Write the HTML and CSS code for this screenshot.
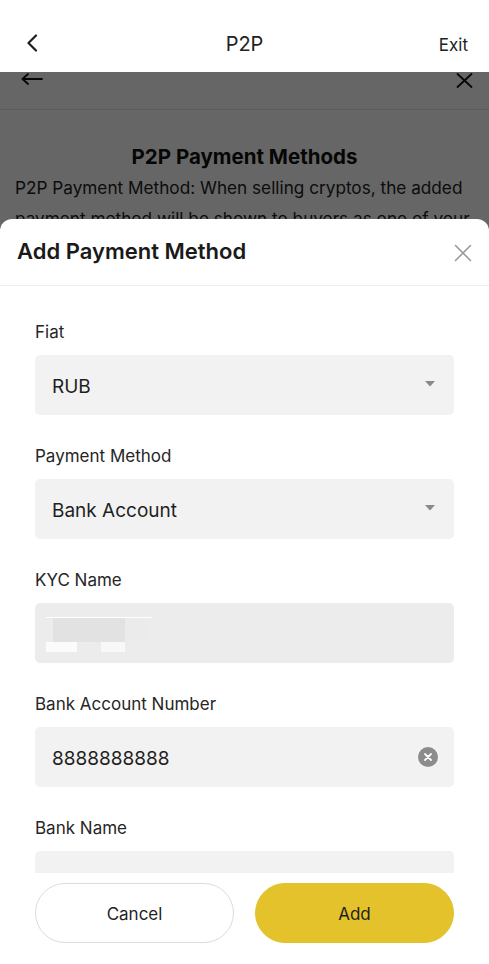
FILE: index.html
```html
<!DOCTYPE html>
<html lang="en">
<head>
<meta charset="utf-8">
<title>P2P</title>
<link rel="stylesheet" href="styles.css">
</head>
<body>
<div class="app">
  <header class="topbar">
    <svg class="topbar-back" width="12" height="18" viewBox="0 0 12 18"><path d="M10 1.5 L2.5 9 L10 16.5" fill="none" stroke="#1f1f1f" stroke-width="2.2" stroke-linecap="round" stroke-linejoin="round"/></svg>
    <div class="topbar-title">P2P</div>
    <div class="topbar-exit">Exit</div>
  </header>

  <main class="stage">
    <section class="page">
      <div class="page-nav">
        <svg width="22" height="12" viewBox="0 0 22 12"><path d="M21 6 H2 M7 1 L1.5 6 L7 11" fill="none" stroke="#111" stroke-width="1.8" stroke-linecap="round" stroke-linejoin="round"/></svg>
        <svg width="17" height="15" viewBox="0 0 17 15"><path d="M1.5 1 L15.5 14 M15.5 1 L1.5 14" fill="none" stroke="#111" stroke-width="1.8" stroke-linecap="round"/></svg>
      </div>
      <h2 class="page-title">P2P Payment Methods</h2>
      <p class="page-text">P2P Payment Method: When selling cryptos, the added payment method will be shown to buyers as one of your accepted payment options.</p>
    </section>

    <div class="backdrop"></div>

    <div class="sheet">
      <div class="sheet-head">
        <h1 class="sheet-title">Add Payment Method</h1>
        <svg class="sheet-close" width="18" height="18" viewBox="0 0 18 18"><path d="M1.5 1.5 L16.5 16.5 M16.5 1.5 L1.5 16.5" fill="none" stroke="#9a9a9a" stroke-width="1.6" stroke-linecap="round"/></svg>
      </div>

      <div class="sheet-body">
        <div class="field">
          <div class="field-label">Fiat</div>
          <div class="field-box">
            <span class="field-value">RUB</span>
            <svg class="caret" width="10" height="6" viewBox="0 0 10 6"><path d="M0 0 H10 L5 5.5 Z" fill="#8a8a8a"/></svg>
          </div>
        </div>
        <div class="field">
          <div class="field-label">Payment Method</div>
          <div class="field-box">
            <span class="field-value">Bank Account</span>
            <svg class="caret" width="10" height="6" viewBox="0 0 10 6"><path d="M0 0 H10 L5 5.5 Z" fill="#8a8a8a"/></svg>
          </div>
        </div>
        <div class="field">
          <div class="field-label">KYC Name</div>
          <div class="field-box field-box--disabled">
            <svg class="masked" width="108" height="38" viewBox="0 0 108 38">
              <rect x="0" y="0" width="106" height="1" fill="#ffffff"/>
              <rect x="7" y="1" width="72" height="24" fill="#e2e2e2"/>
              <rect x="79" y="1" width="24" height="24" fill="#ebebeb"/>
              <rect x="0" y="25" width="31" height="10" fill="#fbfbfb"/>
              <rect x="55" y="25" width="24" height="10" fill="#f8f8f8"/>
            </svg>
          </div>
        </div>
        <div class="field">
          <div class="field-label">Bank Account Number</div>
          <div class="field-box">
            <span class="field-value">8888888888</span>
            <svg class="clear" width="20" height="20" viewBox="0 0 20 20"><circle cx="10" cy="10" r="10" fill="#8c8c8c"/><path d="M7 7 L13 13 M13 7 L7 13" stroke="#fff" stroke-width="1.8" stroke-linecap="round"/></svg>
          </div>
        </div>
        <div class="field">
          <div class="field-label">Bank Name</div>
          <div class="field-box"></div>
        </div>
      </div>

      <div class="sheet-foot">
        <button class="btn btn-cancel">Cancel</button>
        <button class="btn btn-add">Add</button>
      </div>
    </div>
  </main>
</div>
</body>
</html>
```

FILE: styles.css
```css
* { box-sizing: border-box; }
html, body { margin: 0; padding: 0; }
body {
  width: 489px;
  height: 964px;
  overflow: hidden;
  background: #fff;
  font-family: Inter, "Noto Sans", "Liberation Sans", sans-serif;
  color: #1f1f1f;
}
.app { width: 489px; height: 964px; display: flex; flex-direction: column; }

.topbar {
  height: 72px;
  flex: none;
  display: flex;
  align-items: center;
  justify-content: space-between;
  padding: 16px 21px 0 26px;
  position: relative;
  background: #fff;
}
.topbar-title {
  position: absolute;
  left: 0; right: 0; top: 31px;
  text-align: center;
  font-size: 20px;
  line-height: 26px;
  color: #222;
  pointer-events: none;
}
.topbar-exit { font-size: 17px; color: #222; line-height: 22px; margin-top: 2px; }
.topbar-back { margin-top: -3px; }

.stage { flex: 1; position: relative; overflow: hidden; }

.page { background: #fff; height: 147px; overflow: hidden; }
.page-nav {
  height: 38px;
  display: flex;
  justify-content: space-between;
  align-items: flex-start;
  padding: 1px 16px 0 21px;
  border-bottom: 1px solid #e4e4e4;
}
.page-title {
  margin: 0;
  padding-top: 34px;
  text-align: center;
  font-size: 20.5px;
  line-height: 26px;
  font-weight: 700;
  color: #111;
}
.page-text {
  margin: 0;
  padding: 2px 12px 0 15px;
  font-size: 17.2px;
  line-height: 31px;
  color: #222;
}

.backdrop {
  position: absolute;
  inset: 0;
  background: rgba(0, 0, 0, 0.6);
}

.sheet {
  position: absolute;
  top: 147px; left: 0; right: 0; bottom: 0;
  background: #fff;
  border-radius: 12px 12px 0 0;
  display: flex;
  flex-direction: column;
}
.sheet-head {
  height: 67px;
  flex: none;
  display: flex;
  align-items: center;
  justify-content: space-between;
  padding: 0 17px 0 17px;
  border-bottom: 1px solid #ececec;
}
.sheet-title {
  margin: 0;
  font-size: 22px;
  font-weight: 600;
  color: #1a1a1a;
  line-height: 28px;
  margin-top: -2px;
}
.sheet-close { margin-top: 1px; }

.sheet-body {
  flex: 1;
  overflow: hidden;
  padding: 33px 35px 0 35px;
  display: flex;
  flex-direction: column;
  gap: 28px;
}
.field { display: flex; flex-direction: column; gap: 10px; flex: none; }
.field-label { font-size: 17px; line-height: 26px; color: #262626; }
.field-box {
  height: 60px;
  background: #f2f2f2;
  border-radius: 5px;
  display: flex;
  align-items: center;
  justify-content: space-between;
  padding: 0 16px 0 17px;
}
.field-box--disabled { background: #ececec; padding-left: 11px; align-items: flex-start; padding-top: 14px; }
.field-value { font-size: 19px; color: #1f1f1f; line-height: 24px; margin-top: 3px; }
.caret { margin-right: 3px; margin-top: -2px; }
.clear { margin-right: 0; }

.sheet-foot {
  flex: none;
  height: 91px;
  display: flex;
  gap: 21px;
  padding: 10px 35px 21px 35px;
  background: #fff;
}
.btn {
  flex: 1;
  height: 60px;
  border-radius: 30px;
  font-family: inherit;
  font-size: 17px;
  color: #1f1f1f;
  border: 1px solid transparent;
  padding-top: 2px;
}
.btn-cancel { background: #fff; border-color: #dcdcdc; }
.btn-add { background: #e3c22b; border-color: #e3c22b; }
```
